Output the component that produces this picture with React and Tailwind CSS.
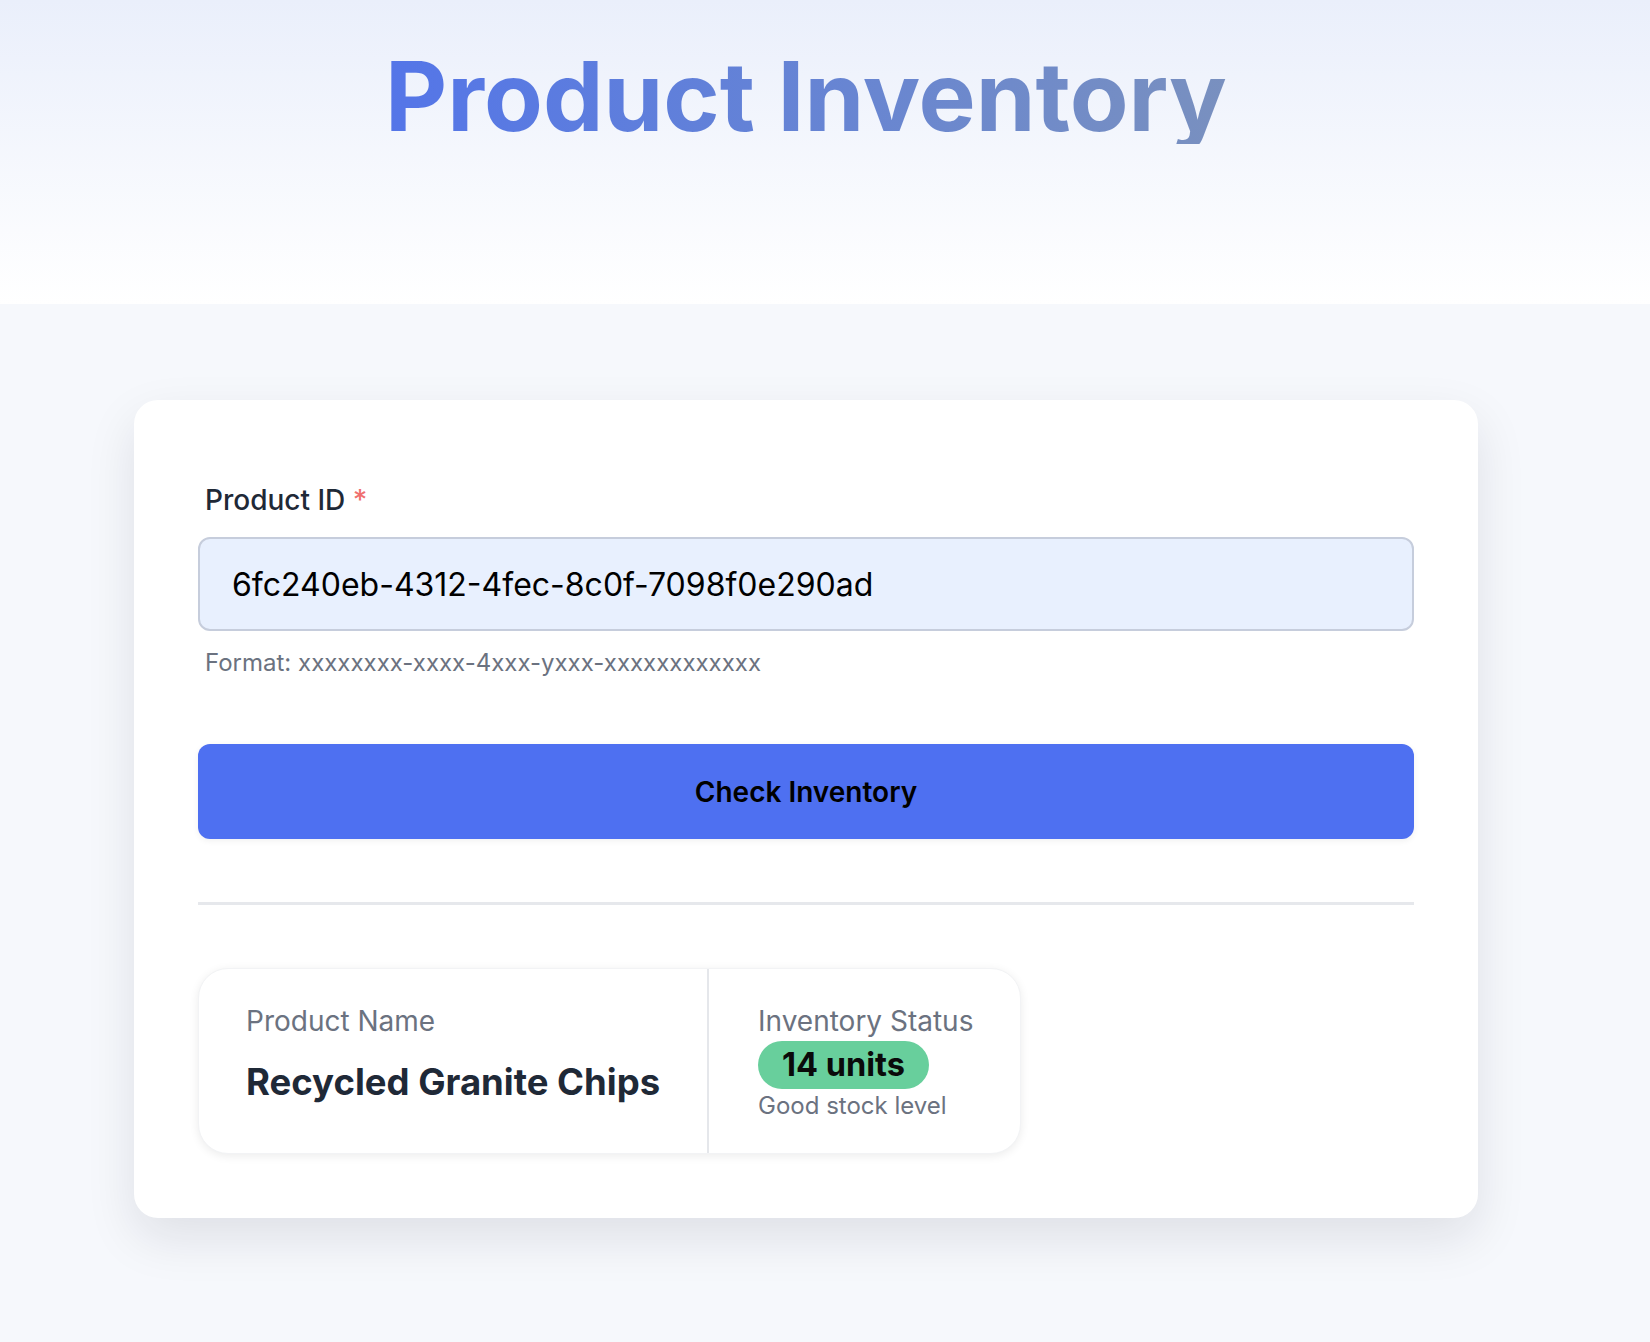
import React from "react";

export default function App() {
  return (
    <div className="min-h-screen bg-[#f6f8fc] font-['Inter','Noto_Sans',sans-serif]">
      <header className="h-[304px] bg-gradient-to-b from-[#eaeffb] to-[#ffffff] pt-[48px]">
        <div className="ml-[134px] w-[1344px] text-center">
          <h1 className="inline-block bg-gradient-to-r from-[#5475e8] to-[#7990bf] bg-clip-text text-[96px] font-bold leading-[96px] text-transparent">
            Product Inventory
          </h1>
        </div>
      </header>

      <main className="pt-[96px] pb-[125px]">
        <div className="ml-[134px] w-[1344px] rounded-[24px] bg-white px-16 pt-[80px] pb-16 shadow-[0_20px_50px_rgba(15,23,42,0.10)]">
          <label className="mb-[17px] ml-[7px] block text-[28px] font-medium leading-[40px] text-[#1f2937]">
            Product ID <span className="text-[#ef6f6f]">*</span>
          </label>
          <input
            readOnly
            value="6fc240eb-4312-4fec-8c0f-7098f0e290ad"
            className="block h-[94px] w-full rounded-[12px] border-2 border-[#c6cddc] bg-[#e8f0fe] px-[32px] text-[32px] text-black outline-none"
          />
          <p className="mt-[14px] ml-[7px] text-[24px] leading-[36px] text-[#6b7280]">
            Format: xxxxxxxx-xxxx-4xxx-yxxx-xxxxxxxxxxxx
          </p>

          <button className="mt-[63px] flex h-[95px] w-full items-center justify-center rounded-[12px] bg-[#4e70f1] text-[28px] font-semibold text-black shadow-[0_2px_6px_rgba(0,0,0,0.06)]">
            Check Inventory
          </button>

          <div className="mt-[63px] h-[3px] w-full bg-[#e6e8ec]" />

          <div className="mt-[63px] flex w-[823px] rounded-[30px] border border-[#f2f3f5] bg-white shadow-[0_2px_10px_rgba(0,0,0,0.08)]">
            <div className="w-[510px] border-r-2 border-[#e5e7eb] pl-[47px] pt-[32px] pb-[31px]">
              <div className="text-[28px] leading-[40px] text-[#6b7280]">Product Name</div>
              <div className="mt-[14px] text-[36.5px] font-bold leading-[54px] text-[#1f2937]">
                Recycled Granite Chips
              </div>
            </div>
            <div className="flex-1 pl-[49px] pt-[32px] pb-[31px]">
              <div className="text-[28px] leading-[40px] text-[#6b7280]">Inventory Status</div>
              <div className="inline-flex h-[48px] items-center rounded-full bg-[#68cf9c] px-[24px] text-[32.5px] font-bold text-[#0a0a0a]">
                14 units
              </div>
              <div className="text-[24px] leading-[33px] text-[#6b7280]">Good stock level</div>
            </div>
          </div>
        </div>
      </main>
    </div>
  );
}
